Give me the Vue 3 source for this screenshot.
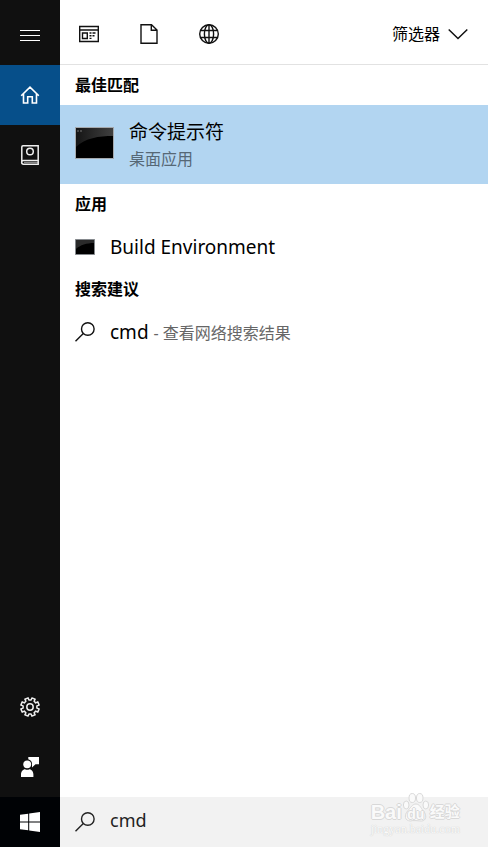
<script setup>
import { ref } from 'vue';

const keyword = ref('cmd');

// 最佳匹配与应用列表
const bestMatch = { name: '命令提示符', type: '桌面应用' };
const apps = [{ id: 1, name: 'Build Environment' }];
</script>

<template>
  <div class="search-panel">
    <nav class="sidebar">
      <button class="side-btn menu-btn" aria-label="菜单">
        <svg width="20" height="20" viewBox="0 0 20 20" fill="none" stroke="#fff">
          <path d="M0 4.500H20M0 9.500H20M0 14.500H20" />
        </svg>
      </button>
      <button class="side-btn active" aria-label="主页">
        <svg width="20" height="20" viewBox="0 0 20 20" fill="none" stroke="#fff" stroke-width="1.600">
          <path d="M1.200 10.800 10 2.200l8.800 8.600M3.500 9v9h4.200v-6.200h4.600V18h4.200V9" />
        </svg>
      </button>
      <button class="side-btn" aria-label="笔记本">
        <svg width="20" height="20" viewBox="0 0 20 20" fill="none" stroke="#eee" stroke-width="1.500">
          <path d="M1.800 17.500V2Q1.800.8 3 .8h15.200v18.400H3.500a1.700 1.700 0 0 1 0-3.700h14.700" />
          <path d="M4 17.400h14" stroke-width="1" opacity=".6" />
          <circle cx="10" cy="6.500" r="3.300" />
        </svg>
      </button>
      <div class="spacer"></div>
      <button class="side-btn" aria-label="设置">
        <svg width="20" height="20" viewBox="0 0 20 20" fill="none" stroke="#eee" stroke-width="1.500" stroke-linejoin="round">
          <path d="M11.100 3.100 11.900.9 15.100 2.200 14.100 4.300 15.700 5.900 17.800 4.900 19.100 8.100 16.900 8.900V11.100L19.100 11.900 17.800 15.100 15.700 14.100 14.100 15.700 15.100 17.800 11.900 19.100 11.100 16.900H8.900L8.100 19.100 4.900 17.800 5.900 15.700 4.300 14.100 2.200 15.100.9 11.900 3.100 11.100V8.900L.9 8.100 2.200 4.900 4.300 5.900 5.900 4.300 4.900 2.200 8.100.9 8.900 3.100z" />
          <circle cx="10" cy="10" r="3.200" />
        </svg>
      </button>
      <button class="side-btn" aria-label="反馈">
        <svg width="20" height="20" viewBox="0 0 20 20" fill="#fff">
          <path d="M8.300 0H19v7.300h-3.500L12 10.500V7.300a5 5 0 0 0-3.700-5z" />
          <circle cx="7.200" cy="7.300" r="3.900" />
          <path d="M1 20v-2.500c0-3 2-5.300 4-5.300 1.400.8 3 .8 4.400 0 2 0 4 2.300 4 5.300V20z" />
        </svg>
      </button>
      <button class="start-btn" aria-label="开始">
        <svg width="20" height="20" viewBox="0 0 20 20" fill="#fff">
          <path d="M0 2.800 8.200 1.700v7.800H0zM9.200 1.500 20 0v9.500H9.200zM0 10.500h8.200v7.800L0 17.200zM9.200 10.500H20V20L9.200 18.500z" />
        </svg>
      </button>
    </nav>

    <div class="content">
      <header class="toolbar">
        <div class="type-list">
          <button class="type-btn" aria-label="应用">
            <svg width="20" height="20" viewBox="0 0 20 20" fill="none" stroke="#111" stroke-width="1.400">
              <path d="M.7 2.500h18.600v15H.7zM.7 6h18.600M3.500 9h4.800v5.500H3.500zM10.500 9h2M10.500 11.700h2M10.500 14.400h2M13.500 9h3M13.500 11.700h2" />
            </svg>
          </button>
          <button class="type-btn" aria-label="文档">
            <svg width="20" height="20" viewBox="0 0 20 20" fill="none" stroke="#111" stroke-width="1.400">
              <path d="M2 .7h10.500L18 6v13.300H2zM12.300.7v5.500H18" />
            </svg>
          </button>
          <button class="type-btn" aria-label="网页">
            <svg width="20" height="20" viewBox="0 0 20 20" fill="none" stroke="#111" stroke-width="1.400">
              <circle cx="10" cy="10" r="9.300" />
              <ellipse cx="10" cy="10" rx="4.600" ry="9.300" />
              <path d="M10 .7v18.600M1.500 6.500h17M1.500 13.500h17" />
            </svg>
          </button>
        </div>
        <button class="filter-btn">
          筛选器
          <svg width="20" height="12" viewBox="0 0 20 12" fill="none" stroke="#111" stroke-width="1.500">
            <path d="m.7 1.500 9.300 9 9.300-9" />
          </svg>
        </button>
      </header>

      <main class="results">
        <h2>最佳匹配</h2>
        <button class="best-match">
          <svg width="40" height="36" viewBox="0 0 40 36">
            <defs>
              <linearGradient id="shine" x1="0" y1="0" x2="1" y2="0">
                <stop offset="0" stop-color="#151515" />
                <stop offset="1" stop-color="#404040" />
              </linearGradient>
            </defs>
            <path d="M.5.5h38v31H.5z" fill="#000" stroke="#a5a9ad" />
            <path d="M1 1h37v8C24 9 10 11 1 20z" fill="url(#shine)" />
            <path d="M2 4h2M5 4h2" stroke="#777" />
          </svg>
          <span class="best-text">
            <span class="best-name">{{ bestMatch.name }}</span>
            <span class="best-type">{{ bestMatch.type }}</span>
          </span>
        </button>

        <h2>应用</h2>
        <button v-for="app in apps" :key="app.id" class="result-item">
          <svg width="20" height="16" viewBox="0 0 20 16">
            <path d="M.5.5h19v15H.5z" fill="#000" stroke="#85898d" />
            <path d="M1 1h18v3C12 4 5 6 1 10z" fill="#2a2a2a" />
          </svg>
          <span>{{ app.name }}</span>
        </button>

        <h2>搜索建议</h2>
        <button class="result-item">
          <svg width="20" height="20" viewBox="0 0 20 20" fill="none" stroke="#111" stroke-width="1.400">
            <circle cx="12.800" cy="7" r="6.300" />
            <path d="M8.300 11.500.5 19.300" />
          </svg>
          <span>{{ keyword }} <small>- 查看网络搜索结果</small></span>
        </button>
      </main>

      <label class="search-box">
        <svg width="20" height="20" viewBox="0 0 20 20" fill="none" stroke="#222" stroke-width="1.400">
          <circle cx="12.800" cy="7" r="6.300" />
          <path d="M8.300 11.500.5 19.300" />
        </svg>
        <input v-model="keyword" type="text" aria-label="搜索">
      </label>
    </div>

    <!-- 水印 -->
    <div class="watermark">
      <div class="brand">
        <span>Bai</span>
        <span class="paw">
          <svg width="28" height="30" viewBox="0 0 30 30" preserveAspectRatio="none" fill="#fafafa" stroke="#d8d8d8">
            <ellipse cx="4.500" cy="12" rx="3" ry="4" />
            <ellipse cx="11" cy="5" rx="3.500" ry="4.500" />
            <ellipse cx="19" cy="5" rx="3.500" ry="4.500" />
            <ellipse cx="25.500" cy="12" rx="3" ry="4" />
            <path d="M15 11c4 0 5 4 8 7 4 4 3 10-2 10-3 0-9-1-12 0-6 0-7-6-3-10 3-3 5-7 9-7z" />
          </svg>
          <span class="du">du</span>
        </span>
        <span class="brand-cn">经验</span>
      </div>
      <div class="site">jingyan.baidu.com</div>
    </div>
  </div>
</template>

<style>
body {
  margin: 0;
}
</style>

<style scoped>
.search-panel {
  position: relative;
  display: flex;
  min-height: 100vh;
  background: #fff;
  color: #000;
  font-family: "Noto Sans", "Noto Sans CJK SC", sans-serif;
}
button {
  padding: 0;
  border: none;
  background: none;
  color: inherit;
  font-family: inherit;
  cursor: pointer;
}
svg {
  display: block;
  flex-shrink: 0;
}

/* 侧边栏 */
.sidebar {
  display: flex;
  flex-direction: column;
  width: 60px;
  flex-shrink: 0;
  background: #101010;
}
.side-btn,
.start-btn {
  display: flex;
  align-items: center;
  justify-content: center;
  height: 60px;
}
.menu-btn {
  height: 65px;
  padding-top: 6px;
}
.active {
  background: #064f8a;
}
.spacer {
  flex: 1;
}
.start-btn {
  height: 50px;
  background: #000205;
}

/* 主区域 */
.content {
  display: flex;
  flex-direction: column;
  flex: 1;
  min-width: 0;
}
.toolbar {
  display: flex;
  align-items: center;
  justify-content: space-between;
  height: 65px;
  padding: 4px 20px 0 19px;
  box-sizing: border-box;
  border-bottom: 1px solid #e2e2e2;
}
.type-list {
  display: flex;
  gap: 40px;
}
.filter-btn {
  display: flex;
  align-items: center;
  gap: 8px;
  font-size: 16px;
  line-height: 20px;
}
.results {
  flex: 1;
}
h2 {
  margin: 0;
  padding: 0 15px;
  font-size: 16px;
  font-weight: bold;
  line-height: 40px;
}
.best-match {
  display: flex;
  align-items: center;
  gap: 14px;
  width: 100%;
  height: 79px;
  padding: 0 15px;
  background: #b2d5f1;
  text-align: left;
}
.best-text {
  display: flex;
  flex-direction: column;
}
.best-name {
  font-size: 19px;
  line-height: 28px;
}
.best-type {
  color: #566876;
  font-size: 16px;
  line-height: 26px;
}
.result-item {
  display: flex;
  align-items: center;
  gap: 15px;
  width: 100%;
  height: 45px;
  padding: 0 15px;
  font-size: 19px;
  text-align: left;
}
.result-item small {
  color: #666;
  font-size: 16px;
}

/* 搜索框 */
.search-box {
  display: flex;
  align-items: center;
  gap: 15px;
  height: 50px;
  padding: 0 15px;
  background: #f2f2f2;
}
.search-box input {
  flex: 1;
  min-width: 0;
  padding: 0 0 4px;
  border: none;
  outline: none;
  background: none;
  color: #222;
  font-family: inherit;
  font-size: 18px;
}

/* 水印 */
.watermark {
  position: absolute;
  right: 28px;
  bottom: 12px;
  color: #fafafa;
  text-shadow: 1px 0 #d8d8d8, -1px 0 #d8d8d8, 0 1px #d8d8d8, 0 -1px #d8d8d8;
  pointer-events: none;
}
.brand {
  display: flex;
  align-items: flex-end;
  font-family: "Liberation Sans", "Noto Sans CJK SC", sans-serif;
  font-size: 20px;
  font-weight: bold;
  line-height: 22px;
}
.paw {
  position: relative;
}
.du {
  position: absolute;
  right: 0;
  bottom: 0;
  left: 0;
  font-size: 14px;
  line-height: 18px;
  text-align: center;
}
.brand-cn {
  font-size: 15px;
}
.site {
  font-family: "Liberation Serif", serif;
  font-size: 12px;
  line-height: 12px;
  color: #fafafa;
  text-shadow: 0 0 1px #bbb;
}
</style>
